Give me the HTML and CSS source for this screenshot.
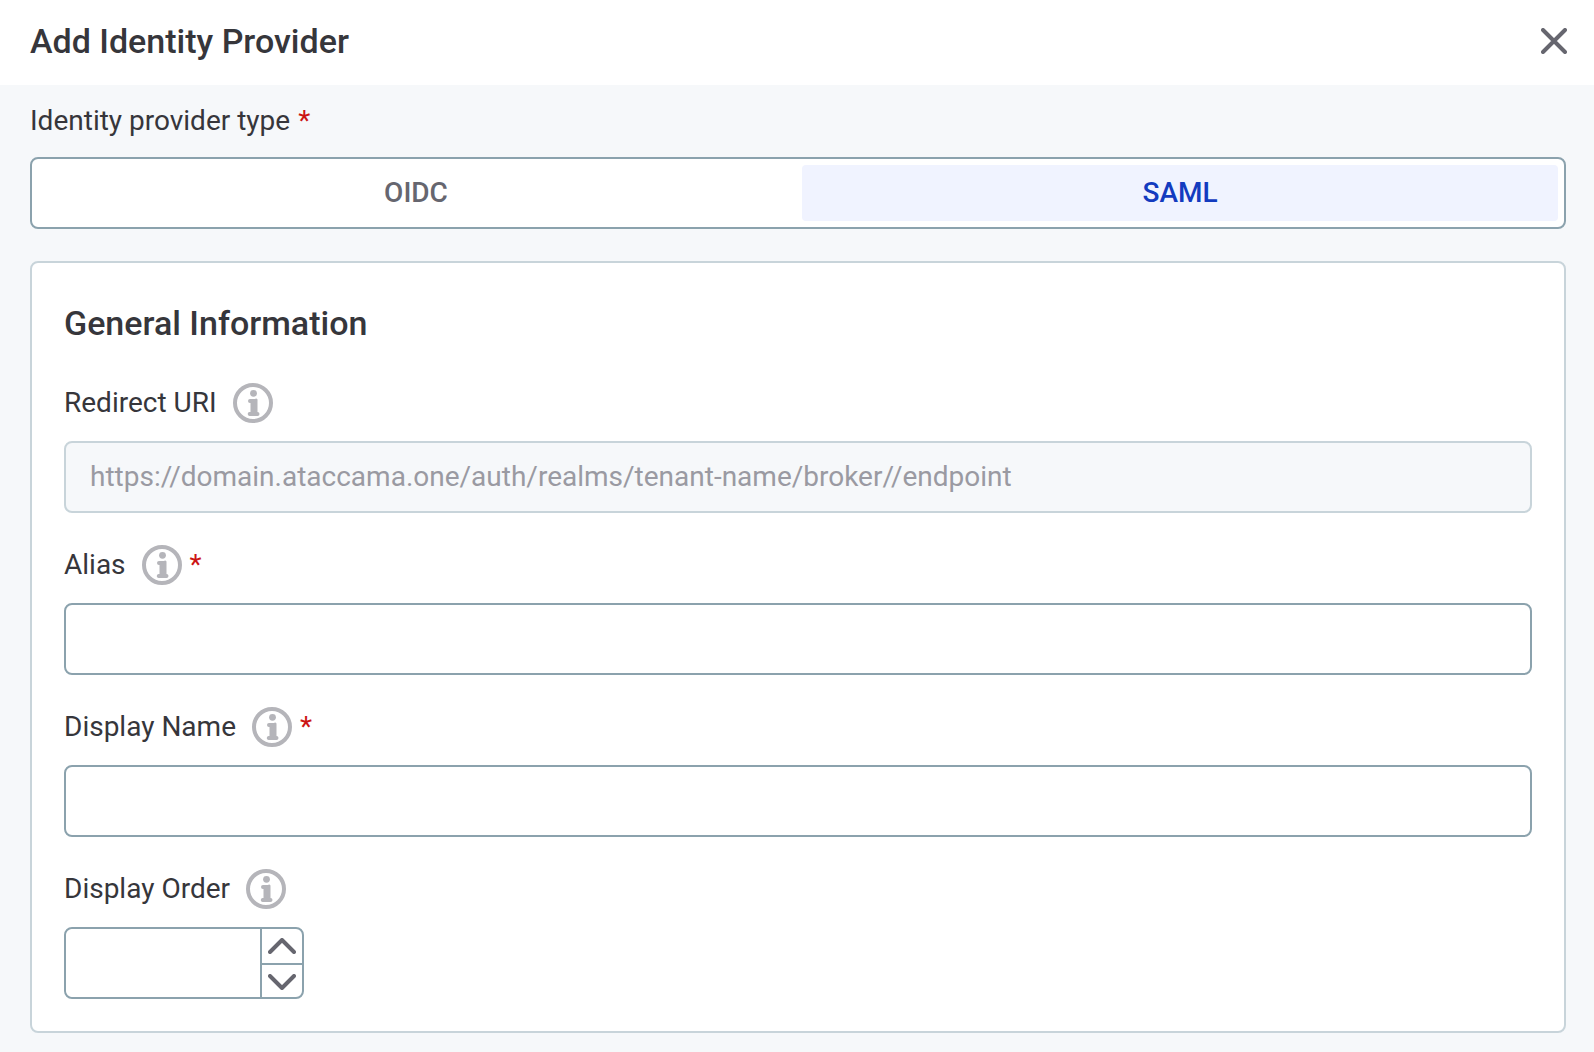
FILE: index.html
```html
<!DOCTYPE html>
<html lang="en">
<head>
  <meta charset="UTF-8">
  <meta name="viewport" content="width=device-width, initial-scale=1.0">
  <title>Add Identity Provider</title>
  <link rel="stylesheet" href="styles.css">
</head>
<body>

  <!-- Info icon, reused by the field labels -->
  <svg class="icon-defs" width="0" height="0" aria-hidden="true">
    <symbol id="icon-info" viewBox="0 0 40 40">
      <circle cx="20" cy="20" r="18" fill="none" stroke="currentColor" stroke-width="4"/>
      <circle cx="20.5" cy="10.3" r="3.4" fill="currentColor"/>
      <path d="M17 16H22A1.5 1.5 0 0 1 24.5 17.500V29A2 2 0 0 1 24.500 33H17A2 2 0 0 1 16.500 29H17.500V20H17A2 2 0 0 1 17 16Z" fill="currentColor"/>
    </symbol>
  </svg>

  <header>
    <h1>Add Identity Provider</h1>
    <button type="button" class="close" aria-label="Close">
      <svg width="26" height="26" viewBox="0 0 26 26">
        <path d="M2 2L24 24M24 2L2 24" fill="none" stroke="currentColor" stroke-width="4" stroke-linecap="round"/>
      </svg>
    </button>
  </header>

  <form class="content">
    <div class="type-label"><span id="typeLabel">Identity provider type</span> <span class="required">*</span></div>
    <div class="switch" role="group" aria-labelledby="typeLabel">
      <button type="button" aria-pressed="false">OIDC</button>
      <button type="button" class="active" aria-pressed="true">SAML</button>
    </div>

    <section class="card">
      <h2>General Information</h2>

      <div class="field">
        <div class="field-label">
          <label for="redirect">Redirect URI</label>
          <svg class="info"><use href="#icon-info"/></svg>
        </div>
        <input type="text" id="redirect" value="https://domain.ataccama.one/auth/realms/tenant-name/broker//endpoint" disabled>
      </div>

      <div class="field">
        <div class="field-label">
          <label for="alias">Alias</label>
          <svg class="info"><use href="#icon-info"/></svg>
          <span class="required">*</span>
        </div>
        <input type="text" id="alias" required>
      </div>

      <div class="field">
        <div class="field-label">
          <label for="displayName">Display Name</label>
          <svg class="info"><use href="#icon-info"/></svg>
          <span class="required">*</span>
        </div>
        <input type="text" id="displayName" required>
      </div>

      <div class="field">
        <div class="field-label">
          <label for="displayOrder">Display Order</label>
          <svg class="info"><use href="#icon-info"/></svg>
        </div>
        <div class="number">
          <input type="number" id="displayOrder">
          <div class="steps">
            <button type="button" aria-label="Increase" onclick="displayOrder.stepUp()">
              <svg width="28" height="16" viewBox="0 0 28 16">
                <path d="M2 14L14 2L26 14" fill="none" stroke="currentColor" stroke-width="4" stroke-linecap="round" stroke-linejoin="round"/>
              </svg>
            </button>
            <button type="button" aria-label="Decrease" onclick="displayOrder.stepDown()">
              <svg width="28" height="16" viewBox="0 0 28 16">
                <path d="M2 2L14 14L26 2" fill="none" stroke="currentColor" stroke-width="4" stroke-linecap="round" stroke-linejoin="round"/>
              </svg>
            </button>
          </div>
        </div>
      </div>
    </section>
  </form>

</body>
</html>
```

FILE: styles.css
```css
* {
  box-sizing: border-box;
}

body {
  font-family: Roboto, Arial, sans-serif;
  font-size: 28px;
  margin: 0;
  background-color: #f6f8fa;
  color: #36363b;
}

button,
input {
  font: inherit;
}

button {
  border: none;
  padding: 0;
  background: none;
  color: #66666f;
  cursor: pointer;
}

svg {
  display: block;
}

.icon-defs {
  position: absolute;
}

header {
  display: flex;
  justify-content: space-between;
  align-items: center;
  height: 85px;
  padding: 0 27px 4px 30px;
  background-color: #fff;
}

h1,
h2 {
  margin: 0;
  font-size: 34px;
  font-weight: 500;
}

.content {
  padding: 0 28px 18px 30px;
}

.type-label {
  display: flex;
  gap: 8px;
  line-height: 72px;
}

.required {
  color: #cc1414;
}

.switch {
  display: grid;
  grid-template-columns: 1fr 1fr;
  gap: 8px;
  height: 72px;
  padding: 6px;
  border: 2px solid #8ba2ad;
  border-radius: 8px;
  background-color: #fff;
}

.switch button {
  padding-bottom: 2px;
  border-radius: 4px;
  font-weight: 500;
}

.switch .active {
  background-color: #f0f3ff;
  color: #133bbf;
}

.card {
  display: flex;
  flex-direction: column;
  gap: 32px;
  margin-top: 32px;
  padding: 32px;
  border: 2px solid #c8d4da;
  border-radius: 8px;
  background-color: #fff;
}

h2 {
  line-height: 56px;
}

.field-label {
  display: flex;
  align-items: center;
  height: 40px;
  margin-bottom: 18px;
}

.field-label label,
.field-label .required {
  padding-bottom: 2px;
}

.info {
  width: 40px;
  height: 40px;
  margin: 0 8px 0 16px;
  color: #b5b5ba;
}

input {
  display: block;
  width: 100%;
  height: 72px;
  padding: 0 24px 2px;
  border: 2px solid #8ba2ad;
  border-radius: 8px;
  background-color: #fff;
  color: #36363b;
}

input:disabled {
  border-color: #c8d4da;
  background-color: #f6f8fa;
  color: #9a9aa2;
}

/* Number field with its own step buttons */
.number {
  display: flex;
  width: 240px;
  height: 72px;
  border: 2px solid #8ba2ad;
  border-radius: 8px;
}

.number input {
  flex: 1;
  min-width: 0;
  height: 100%;
  border: none;
  appearance: textfield;
}

.number input::-webkit-inner-spin-button {
  display: none;
}

.steps {
  display: grid;
  grid-template-rows: 1fr 1fr;
  width: 42px;
  border-left: 2px solid #8ba2ad;
}

.steps button {
  display: flex;
  justify-content: center;
  align-items: center;
}

.steps button + button {
  padding-top: 2px;
  border-top: 2px solid #8ba2ad;
}
```
